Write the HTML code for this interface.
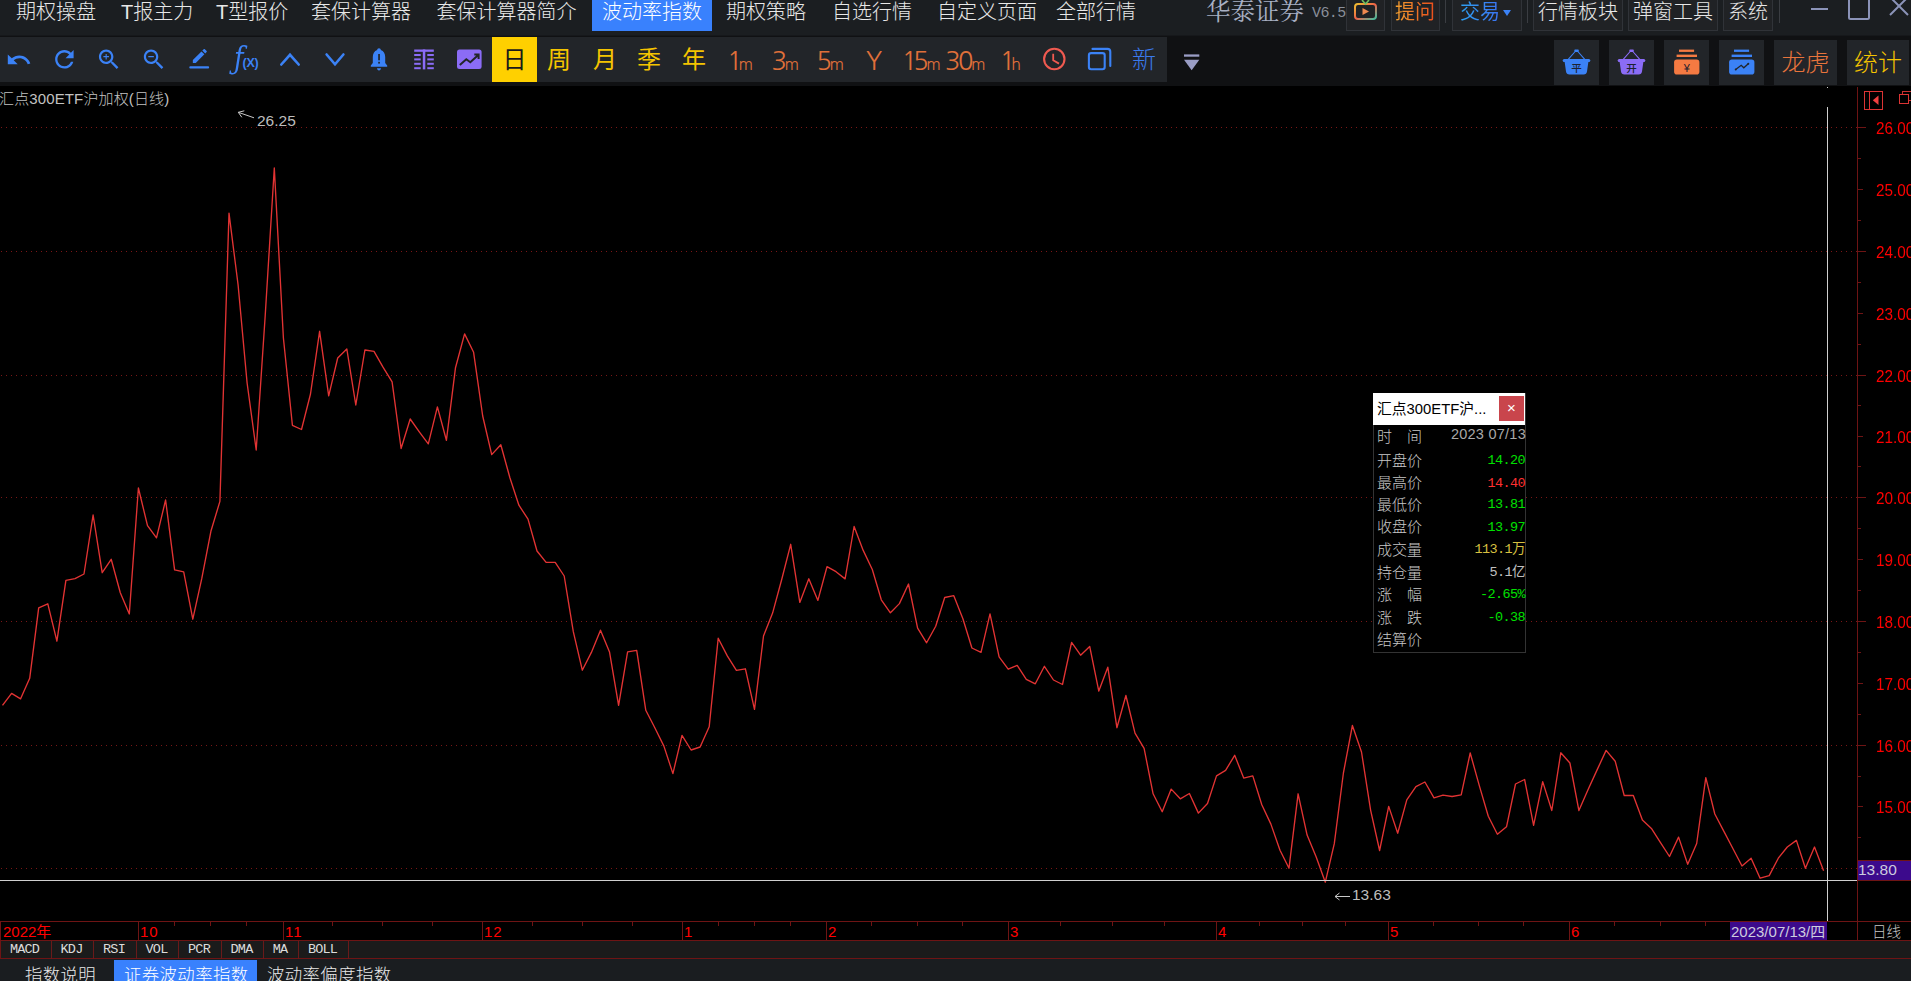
<!DOCTYPE html><html lang="zh"><head><meta charset="utf-8"><title>波动率指数</title><style>
html,body{margin:0;padding:0;background:#000;}
body{width:1911px;height:981px;overflow:hidden;position:relative;font-family:"Liberation Sans","Noto Sans CJK SC",sans-serif;}
.a{position:absolute;white-space:nowrap;}
.m{position:absolute;top:-3.5px;height:30px;line-height:30px;font-size:20px;color:#e8e8e8;font-weight:300;white-space:nowrap;}
.bx{position:absolute;top:-1px;height:32px;border:1px solid #303338;background:#202225;box-sizing:border-box;}
.tk{position:absolute;top:37px;height:45px;line-height:45px;text-align:center;white-space:nowrap;}
.yl{color:#f5c400;font-size:24px;line-height:46.5px;}
.or{color:#e0703a;font-family:"NanumGothic",sans-serif;font-weight:400;line-height:49.5px;}
.rb{position:absolute;top:40px;height:44.5px;background:#222529;}
.ax{position:absolute;transform:scaleX(0.955);transform-origin:0 0;font-size:16px;color:#ff0000;white-space:nowrap;line-height:16px;}
.tx{position:absolute;font-size:15px;color:#ff0000;white-space:nowrap;line-height:16px;top:924px;}
.ind{position:absolute;top:941px;height:18px;line-height:18px;font-size:13.5px;color:#dcdcdc;text-align:center;border-right:1px solid #6a1a1a;box-sizing:border-box;font-family:"Liberation Mono","Noto Sans CJK SC",monospace;letter-spacing:-0.8px;text-indent:-2px;}
.bt{position:absolute;top:961px;height:30px;line-height:28px;font-size:17.4px;letter-spacing:0.4px;color:#e8e8e8;font-weight:300;white-space:nowrap;}
.tl{position:absolute;left:1377px;font-size:15px;color:#c8c8c8;line-height:18px;white-space:pre;font-weight:300;}
.tv{position:absolute;right:386px;font-size:13.5px;line-height:18px;white-space:pre;font-family:"Liberation Mono","Noto Sans CJK SC",monospace;letter-spacing:-0.6px;}
</style></head><body>
<div class="a" style="left:0;top:0;width:1911px;height:35px;background:#1b1e21"></div>
<div class="a" style="left:0;top:35px;width:1911px;height:1px;background:#16181b"></div>
<div class="a" style="left:592px;top:0;width:120px;height:31px;background:#3981fd"></div>
<div class="m" style="left:16px;color:#e8e8e8">期权操盘</div>
<div class="m" style="left:121px;color:#e8e8e8">T报主力</div>
<div class="m" style="left:216px;color:#e8e8e8">T型报价</div>
<div class="m" style="left:311px;color:#e8e8e8">套保计算器</div>
<div class="m" style="left:436.5px;color:#e8e8e8">套保计算器简介</div>
<div class="m" style="left:602px;color:#fff">波动率指数</div>
<div class="m" style="left:726px;color:#e8e8e8">期权策略</div>
<div class="m" style="left:832px;color:#e8e8e8">自选行情</div>
<div class="m" style="left:937px;color:#e8e8e8">自定义页面</div>
<div class="m" style="left:1056px;color:#e8e8e8">全部行情</div>
<div class="a" style="left:1206px;top:-5px;font-family:'Liberation Serif','Noto Serif CJK SC',serif;font-size:24.5px;line-height:34px;color:#a8b0c4;font-weight:400">华泰证券</div>
<div class="a" style="left:1312px;top:4px;font-family:'Liberation Mono',monospace;font-size:15px;line-height:20px;color:#8a8f9a;letter-spacing:-0.6px">V6.5</div>
<div class="bx" style="left:1346px;width:39px"></div>
<div class="bx" style="left:1391px;width:49px"></div>
<div class="bx" style="left:1452px;width:70px"></div>
<div class="bx" style="left:1533px;width:90px"></div>
<div class="bx" style="left:1628px;width:90px"></div>
<div class="bx" style="left:1723px;width:50px"></div>
<div class="a" style="left:1445px;top:0;width:1px;height:23px;background:#3a3d42"></div>
<div class="a" style="left:1527px;top:0;width:1px;height:23px;background:#3a3d42"></div>
<div class="a" style="left:1779px;top:0;width:1px;height:23px;background:#3a3d42"></div>
<div class="m" style="left:1395px;font-weight:400;background:linear-gradient(90deg,#f2a030,#ea4c1c);-webkit-background-clip:text;background-clip:text;color:transparent">提问</div>
<div class="m" style="left:1460px;font-weight:400;background:linear-gradient(90deg,#2ea0f0,#3b72f2);-webkit-background-clip:text;background-clip:text;color:transparent">交易</div>
<div class="a" style="left:1503px;top:10px;width:0;height:0;border-left:4.5px solid transparent;border-right:4.5px solid transparent;border-top:6px solid #3b82f6"></div>
<div class="m" style="left:1538px">行情板块</div>
<div class="m" style="left:1633px">弹窗工具</div>
<div class="m" style="left:1728px">系统</div>
<svg class="a" style="left:1350px;top:0" width="32" height="24" viewBox="0 0 32 24"><defs><linearGradient id="tvg" x1="0" y1="0" x2="1" y2="1"><stop offset="0" stop-color="#f0c030"/><stop offset="0.5" stop-color="#f06048"/><stop offset="1" stop-color="#40c0a0"/></linearGradient></defs><rect x="5" y="4" width="21" height="15" rx="3" fill="none" stroke="url(#tvg)" stroke-width="2"/><path d="M12 0 L15.5 4 L19 0" fill="none" stroke="#70c060" stroke-width="1.6"/><path d="M12.5 8 L19 11.5 L12.5 15 Z" fill="#f08a50"/></svg>
<div class="a" style="left:1811px;top:7.5px;width:17px;height:2px;background:#8b93b8"></div>
<div class="a" style="left:1848px;top:-6px;width:18px;height:22px;border:2px solid #8b93b8;border-radius:2.5px"></div>
<svg class="a" style="left:1888px;top:0" width="23" height="17" viewBox="0 0 23 17"><path d="M2 -3 L20 15 M20 -3 L2 15" stroke="#8b93b8" stroke-width="2" fill="none"/></svg>
<div class="a" style="left:0;top:36px;width:1911px;height:50px;background:#101113"></div>
<div class="a" style="left:0;top:37px;width:1167px;height:45px;background:#222529"></div>
<div class="a" style="left:492px;top:37px;width:45px;height:45px;background:#ffd000"></div>
<div class="tk yl" style="left:492.0px;width:45px;color:#1a1a1a">日</div>
<div class="tk yl" style="left:536.5px;width:45px;">周</div>
<div class="tk yl" style="left:582.5px;width:45px;">月</div>
<div class="tk yl" style="left:626.5px;width:45px;">季</div>
<div class="tk yl" style="left:671.5px;width:45px;">年</div>
<div class="tk or" style="left:717.2px;width:45px;"><span style="font-size:25.5px;letter-spacing:-2.4px"><span style="letter-spacing:-4px">1</span></span><span style="font-size:16px;letter-spacing:-0.5px">m</span></div>
<div class="tk or" style="left:762.5px;width:45px;"><span style="font-size:25.5px;letter-spacing:-2.4px">3</span><span style="font-size:16px;letter-spacing:-0.5px">m</span></div>
<div class="tk or" style="left:807.5px;width:45px;"><span style="font-size:25.5px;letter-spacing:-2.4px">5</span><span style="font-size:16px;letter-spacing:-0.5px">m</span></div>
<div class="tk or" style="left:851.5px;width:45px;"><span style="font-size:25px;position:relative;top:-1px">Y</span></div>
<div class="tk or" style="left:891.0px;width:60px;"><span style="font-size:25.5px;letter-spacing:-2.4px"><span style="letter-spacing:-4px">1</span>5</span><span style="font-size:16px;letter-spacing:-0.5px">m</span></div>
<div class="tk or" style="left:935.0px;width:60px;"><span style="font-size:25.5px;letter-spacing:-2.4px">30</span><span style="font-size:16px;letter-spacing:-0.5px">m</span></div>
<div class="tk or" style="left:987.5px;width:45px;"><span style="font-size:25.5px;letter-spacing:-2.4px"><span style="letter-spacing:-4px">1</span></span><span style="font-size:16px;letter-spacing:-0.5px">h</span></div>
<div class="tk " style="left:1121.5px;width:45px;color:#3a7aec;font-size:24px;font-weight:300">新</div>
<div class="rb" style="left:1554px;width:45px"></div>
<div class="rb" style="left:1609px;width:45px"></div>
<div class="rb" style="left:1664px;width:45px"></div>
<div class="rb" style="left:1719px;width:45px"></div>
<div class="rb" style="left:1774px;width:63px"></div>
<div class="rb" style="left:1847px;width:62px"></div>
<div class="a" style="left:1774px;top:40px;width:63px;height:44px;line-height:46px;text-align:center;font-size:24px;color:#e8743c;font-weight:300">龙虎</div>
<div class="a" style="left:1847px;top:40px;width:62px;height:44px;line-height:46px;text-align:center;font-size:24px;color:#f5c400;font-weight:300">统计</div>
<svg class="a" style="left:0;top:0" width="1911" height="90" viewBox="0 0 1911 90">
<g fill="#3b82f6">
<path transform="translate(5.6,46.7) scale(1.1)" d="M12.5 8c-2.65 0-5.05.99-6.9 2.6L2 7v9h9l-3.62-3.62c1.39-1.16 3.16-1.88 5.12-1.88 3.54 0 6.55 2.31 7.6 5.5l2.37-.78C21.08 11.03 17.15 8 12.5 8z"/>
<path transform="translate(50.5,45.5) scale(1.156)" d="M17.65 6.35C16.2 4.9 14.21 4 12 4c-4.42 0-7.99 3.58-7.99 8s3.57 8 7.99 8c3.73 0 6.84-2.55 7.73-6h-2.08c-.82 2.33-3.04 4-5.65 4-3.31 0-6-2.69-6-6s2.69-6 6-6c1.66 0 3.14.69 4.22 1.78L13 11h7V4l-2.35 2.35z"/>
<path transform="translate(95.6,46.1) scale(1.112)" d="M15.5 14h-.79l-.28-.27C15.41 12.59 16 11.11 16 9.5 16 5.91 13.09 3 9.5 3S3 5.91 3 9.5 5.91 16 9.5 16c1.61 0 3.09-.59 4.23-1.57l.27.28v.79l5 4.99L20.49 19l-4.99-5zm-6 0C7.01 14 5 11.99 5 9.5S7.01 5 9.5 5 14 7.01 14 9.5 11.99 14 9.5 14z M12 10h-2v2H9v-2H7V9h2V7h1v2h2v1z"/>
<path transform="translate(140.5,46.1) scale(1.112)" d="M15.5 14h-.79l-.28-.27C15.41 12.59 16 11.11 16 9.5 16 5.91 13.09 3 9.5 3S3 5.91 3 9.5 5.91 16 9.5 16c1.61 0 3.09-.59 4.23-1.57l.27.28v.79l5 4.99L20.49 19l-4.99-5zm-6 0C7.01 14 5 11.99 5 9.5S7.01 5 9.5 5 14 7.01 14 9.5 11.99 14 9.5 14zM7 9h5v1H7z"/>
<path transform="translate(190.5,46.6) scale(0.78)" d="M3 17.25V21h3.75L17.81 9.94l-3.75-3.75L3 17.25zM20.71 7.04c.39-.39.39-1.02 0-1.41l-2.34-2.34c-.39-.39-1.02-.39-1.41 0l-1.83 1.83 3.75 3.75 1.83-1.83z"/>
<rect x="189.3" y="66.3" width="19.8" height="2.2" rx="1"/>
</g>
<g fill="none" stroke="#3b82f6" stroke-width="2.6" stroke-linecap="round" stroke-linejoin="miter">
<path d="M281.3 64.5 L290 54.8 L298.7 64.5"/>
<path d="M326.6 54.5 L335 64.3 L343.4 54.5"/>
</g>
<!-- bell -->
<g fill="#3b82f6">
<path d="M379 48.3 c1.1 0 1.8 .8 1.8 1.8 c3 1 4.4 3.800 4.4 7 v5.800 l2 2.600 v1.300 h-16.400 v-1.300 l2 -2.600 v-5.800 c0 -3.200 1.400 -6 4.400 -7 c0 -1 .7 -1.800 1.800 -1.800z"/>
<path d="M377 68.200 h4 c0 1.200 -.9 2.200 -2 2.200 s-2 -1 -2 -2.200z"/>
</g>
<rect x="378.200" y="54" width="1.700" height="6.300" fill="#222529"/><rect x="378.200" y="61.800" width="1.700" height="1.800" fill="#222529"/>
<!-- table -->
<g fill="#8b6cf6">
<rect x="414.200" y="49.500" width="19.600" height="2.300"/>
<rect x="422.800" y="49.500" width="2.500" height="19.900"/>
<rect x="414.200" y="54" width="6.500" height="2"/><rect x="414.200" y="58.400" width="6.500" height="2"/><rect x="414.200" y="62.800" width="6.500" height="2"/><rect x="414.200" y="67.200" width="6.500" height="2"/>
<rect x="427.300" y="54" width="6.500" height="2"/><rect x="427.300" y="58.400" width="6.500" height="2"/><rect x="427.300" y="62.800" width="6.500" height="2"/><rect x="427.300" y="67.200" width="6.500" height="2"/>
<!-- chart image -->
<rect x="457" y="49.500" width="24.600" height="19.500" rx="2.500"/>
</g>
<path d="M459.800 65 L466.300 59.300 L470.300 62.300 L478 55.200 M474.300 54.600 L478.600 54.600 L478.600 59" fill="none" stroke="#222529" stroke-width="2"/>
<!-- clock -->
<circle cx="1054.300" cy="59" r="10.200" fill="none" stroke="#f05a50" stroke-width="2.100"/>
<path d="M1053.200 53.800 L1053.200 60.300 L1059 63.600" fill="none" stroke="#f05a50" stroke-width="1.800"/>
<!-- copy -->
<rect x="1088.900" y="53.100" width="15.800" height="16.200" rx="2.200" fill="none" stroke="#3b82f6" stroke-width="2.100"/>
<path d="M1092.500 48.900 L1107.500 48.900 Q1110.300 48.900 1110.300 51.700 L1110.300 66" fill="none" stroke="#3b82f6" stroke-width="2.100" stroke-linecap="round"/>
<!-- dropdown -->
<rect x="1184" y="54.400" width="15.300" height="2.300" fill="#9a9dc5"/>
<path d="M1184 59.800 L1199.300 59.800 L1191.650 70.300 Z" fill="#9a9dc5"/>
<!-- baskets -->
<g id="bk1" fill="#3b82f6">
<rect x="1562.700" y="59" width="27.600" height="3" rx="1.500"/>
<path d="M1564.500 61 L1588.500 61 L1587 71.600 Q1586.600 74.600 1583.600 74.600 L1569.400 74.600 Q1566.400 74.600 1566 71.600 Z"/>
<rect x="1574.300" y="49.600" width="4.500" height="2.300" rx="0.800"/>
<path d="M1567.800 59.800 L1575.600 51 M1585.200 59.800 L1577.400 51" stroke="#3b82f6" stroke-width="1.100" fill="none"/>
</g>
<g id="bk2" fill="#8b6cf6" transform="translate(55,0)">
<rect x="1562.700" y="59" width="27.600" height="3" rx="1.500"/>
<path d="M1564.500 61 L1588.500 61 L1587 71.600 Q1586.600 74.600 1583.600 74.600 L1569.400 74.600 Q1566.400 74.600 1566 71.600 Z"/>
<rect x="1574.300" y="49.600" width="4.500" height="2.300" rx="0.800"/>
<path d="M1567.800 59.800 L1575.600 51 M1585.200 59.800 L1577.400 51" stroke="#8b6cf6" stroke-width="1.100" fill="none"/>
</g>
<g fill="#f57a42">
<rect x="1679" y="49.600" width="15.100" height="2.300"/>
<rect x="1676.600" y="54.600" width="20.400" height="2.400"/>
<rect x="1674.100" y="59.600" width="25.300" height="15" rx="2.800"/>
</g>
<g fill="#3b82f6">
<rect x="1734" y="49.600" width="15.100" height="2.300"/>
<rect x="1731.600" y="54.600" width="20.400" height="2.400"/>
<rect x="1729.100" y="59.600" width="25.300" height="15" rx="2.800"/>
</g>
<path d="M1735.700 69.600 L1741.200 65.300 L1743.800 67.800 L1748.300 63.800" fill="none" stroke="#222529" stroke-width="1.300"/>
<circle cx="1735.700" cy="69.600" r="1" fill="#222529"/><circle cx="1748.300" cy="63.800" r="1" fill="#222529"/>
<g font-family="'Liberation Sans','Noto Sans CJK SC',sans-serif" font-size="10.500" fill="#1d2230" text-anchor="middle" font-weight="500">
<text x="1576.500" y="72.300">平</text>
<text x="1631.500" y="72.300">开</text>
<text x="1686.700" y="71.800" font-size="11">¥</text>
</g>
</svg>
<div class="a" style="left:233.5px;top:38px;line-height:40px;color:#3b82f6;font-family:'DejaVu Serif',serif;font-style:italic;font-size:31.5px;transform:scaleX(0.82);transform-origin:0 0">ƒ</div>
<div class="a" style="left:242.5px;top:56px;line-height:14px;color:#3b82f6;font-size:12.5px;font-weight:bold;letter-spacing:-0.2px">(X)</div>

<svg class="a" style="left:0;top:0" width="1911" height="981" viewBox="0 0 1911 981">
<line x1="1" x2="1857" y1="127.5" y2="127.5" stroke="#7a1616" stroke-width="1" stroke-dasharray="1 4" shape-rendering="crispEdges"/>
<line x1="1" x2="1857" y1="251.5" y2="251.5" stroke="#7a1616" stroke-width="1" stroke-dasharray="1 4" shape-rendering="crispEdges"/>
<line x1="1" x2="1857" y1="375.5" y2="375.5" stroke="#7a1616" stroke-width="1" stroke-dasharray="1 4" shape-rendering="crispEdges"/>
<line x1="1" x2="1857" y1="497.5" y2="497.5" stroke="#7a1616" stroke-width="1" stroke-dasharray="1 4" shape-rendering="crispEdges"/>
<line x1="1" x2="1857" y1="621.5" y2="621.5" stroke="#7a1616" stroke-width="1" stroke-dasharray="1 4" shape-rendering="crispEdges"/>
<line x1="1" x2="1857" y1="745.5" y2="745.5" stroke="#7a1616" stroke-width="1" stroke-dasharray="1 4" shape-rendering="crispEdges"/>
<line x1="1" x2="1857" y1="868.5" y2="868.5" stroke="#7a1616" stroke-width="1" stroke-dasharray="1 4" shape-rendering="crispEdges"/>
<line x1="1857.5" x2="1857.5" y1="87" y2="941" stroke="#6e1414" stroke-width="1" shape-rendering="crispEdges"/>
<line x1="1857" x2="1866" y1="127.5" y2="127.5" stroke="#6e1414" stroke-width="1" shape-rendering="crispEdges"/>
<line x1="1857" x2="1861" y1="158.5" y2="158.5" stroke="#6e1414" stroke-width="1" shape-rendering="crispEdges"/>
<line x1="1857" x2="1863" y1="189.5" y2="189.5" stroke="#6e1414" stroke-width="1" shape-rendering="crispEdges"/>
<line x1="1857" x2="1861" y1="220.5" y2="220.5" stroke="#6e1414" stroke-width="1" shape-rendering="crispEdges"/>
<line x1="1857" x2="1866" y1="251.5" y2="251.5" stroke="#6e1414" stroke-width="1" shape-rendering="crispEdges"/>
<line x1="1857" x2="1861" y1="282.5" y2="282.5" stroke="#6e1414" stroke-width="1" shape-rendering="crispEdges"/>
<line x1="1857" x2="1863" y1="313.5" y2="313.5" stroke="#6e1414" stroke-width="1" shape-rendering="crispEdges"/>
<line x1="1857" x2="1861" y1="344.5" y2="344.5" stroke="#6e1414" stroke-width="1" shape-rendering="crispEdges"/>
<line x1="1857" x2="1866" y1="375.5" y2="375.5" stroke="#6e1414" stroke-width="1" shape-rendering="crispEdges"/>
<line x1="1857" x2="1861" y1="405.5" y2="405.5" stroke="#6e1414" stroke-width="1" shape-rendering="crispEdges"/>
<line x1="1857" x2="1863" y1="436.5" y2="436.5" stroke="#6e1414" stroke-width="1" shape-rendering="crispEdges"/>
<line x1="1857" x2="1861" y1="466.5" y2="466.5" stroke="#6e1414" stroke-width="1" shape-rendering="crispEdges"/>
<line x1="1857" x2="1866" y1="497.5" y2="497.5" stroke="#6e1414" stroke-width="1" shape-rendering="crispEdges"/>
<line x1="1857" x2="1861" y1="528.5" y2="528.5" stroke="#6e1414" stroke-width="1" shape-rendering="crispEdges"/>
<line x1="1857" x2="1863" y1="559.5" y2="559.5" stroke="#6e1414" stroke-width="1" shape-rendering="crispEdges"/>
<line x1="1857" x2="1861" y1="590.5" y2="590.5" stroke="#6e1414" stroke-width="1" shape-rendering="crispEdges"/>
<line x1="1857" x2="1866" y1="621.5" y2="621.5" stroke="#6e1414" stroke-width="1" shape-rendering="crispEdges"/>
<line x1="1857" x2="1861" y1="652.5" y2="652.5" stroke="#6e1414" stroke-width="1" shape-rendering="crispEdges"/>
<line x1="1857" x2="1863" y1="683.5" y2="683.5" stroke="#6e1414" stroke-width="1" shape-rendering="crispEdges"/>
<line x1="1857" x2="1861" y1="714.5" y2="714.5" stroke="#6e1414" stroke-width="1" shape-rendering="crispEdges"/>
<line x1="1857" x2="1866" y1="745.5" y2="745.5" stroke="#6e1414" stroke-width="1" shape-rendering="crispEdges"/>
<line x1="1857" x2="1861" y1="776.5" y2="776.5" stroke="#6e1414" stroke-width="1" shape-rendering="crispEdges"/>
<line x1="1857" x2="1863" y1="806.5" y2="806.5" stroke="#6e1414" stroke-width="1" shape-rendering="crispEdges"/>
<line x1="1857" x2="1861" y1="837.5" y2="837.5" stroke="#6e1414" stroke-width="1" shape-rendering="crispEdges"/>
<line x1="1857" x2="1866" y1="868.5" y2="868.5" stroke="#6e1414" stroke-width="1" shape-rendering="crispEdges"/>
<polyline points="2.5,705.4 11.6,693.4 20.6,698.8 29.7,678.3 38.7,607.8 47.8,603.8 56.9,641.2 65.9,580.4 75.0,578.7 84.0,574.0 93.1,515.0 102.2,572.7 111.2,559.3 120.3,592.7 129.3,614.0 138.4,488.0 147.5,525.6 156.5,537.9 165.6,500.0 174.6,569.9 183.7,571.8 192.8,619.2 201.8,578.4 210.9,531.3 219.9,501.4 229.0,213.2 238.1,285.0 247.1,383.0 256.2,450.0 265.2,315.8 274.3,168.0 283.4,338.0 292.4,425.3 301.5,429.5 310.5,394.0 319.6,331.3 328.7,395.8 337.7,358.0 346.8,348.9 355.8,405.0 364.9,350.0 374.0,351.4 383.0,367.2 392.1,381.9 401.1,448.5 410.2,419.0 419.3,431.8 428.3,443.9 437.4,406.9 446.4,440.3 455.5,367.7 464.6,333.9 473.6,352.3 482.7,416.0 491.7,454.6 500.8,444.7 509.9,477.7 518.9,505.2 528.0,519.1 537.0,551.0 546.1,562.4 555.2,562.4 564.2,576.0 573.3,631.7 582.3,670.2 591.4,652.4 600.5,630.2 609.5,651.9 618.6,705.4 627.6,651.9 636.7,650.4 645.8,710.3 654.8,727.8 663.9,746.1 672.9,773.6 682.0,735.4 691.1,750.0 700.1,747.0 709.2,726.8 718.2,638.2 727.3,655.9 736.4,670.3 745.4,668.8 754.5,709.4 763.5,636.0 772.6,613.1 781.7,579.5 790.7,544.3 799.8,602.4 808.8,578.8 817.9,600.4 827.0,566.7 836.0,571.7 845.1,578.9 854.1,526.5 863.2,550.4 872.3,569.5 881.3,599.8 890.4,612.8 899.4,603.6 908.5,584.0 917.6,628.2 926.6,642.8 935.7,626.2 944.7,597.5 953.8,595.7 962.9,618.8 971.9,648.0 981.0,652.4 990.0,613.9 999.1,656.9 1008.2,669.2 1017.2,665.4 1026.3,679.3 1035.3,683.8 1044.4,666.3 1053.5,680.0 1062.5,684.5 1071.6,642.4 1080.6,655.2 1089.7,646.4 1098.8,691.1 1107.8,667.2 1116.9,727.7 1125.9,695.5 1135.0,733.2 1144.1,748.4 1153.1,793.8 1162.2,811.7 1171.2,789.1 1180.3,798.8 1189.4,793.5 1198.4,813.1 1207.5,803.5 1216.5,775.9 1225.6,770.4 1234.7,755.3 1243.7,778.1 1252.8,775.9 1261.8,804.8 1270.9,824.1 1280.0,850.3 1289.0,868.2 1298.1,793.8 1307.1,835.1 1316.2,857.1 1325.3,882.2 1334.3,843.7 1343.4,773.0 1352.4,725.5 1361.5,752.0 1370.6,810.1 1379.6,850.5 1388.7,806.4 1397.7,833.2 1406.8,799.9 1415.9,786.7 1424.9,782.0 1434.0,797.9 1443.0,795.2 1452.1,796.5 1461.2,794.8 1470.2,753.0 1479.3,785.6 1488.3,816.2 1497.4,834.2 1506.5,826.8 1515.5,784.0 1524.6,779.5 1533.6,825.4 1542.7,781.6 1551.8,810.5 1560.8,752.8 1569.9,763.0 1578.9,810.6 1588.0,789.8 1597.1,769.9 1606.1,750.4 1615.2,761.2 1624.2,795.5 1633.3,795.5 1642.4,820.1 1651.4,828.4 1660.5,842.6 1669.5,856.5 1678.6,837.1 1687.7,864.3 1696.7,843.5 1705.8,777.7 1714.8,814.0 1723.9,831.4 1733.0,848.7 1742.0,866.0 1751.1,858.2 1760.1,878.2 1769.2,875.6 1778.3,858.2 1787.3,847.0 1796.4,840.4 1805.4,868.3 1814.5,847.0 1823.6,870.7" fill="none" stroke="#e23333" stroke-width="1.35" stroke-linejoin="round"/>
<line x1="0" x2="1857" y1="880.5" y2="880.5" stroke="#d0d0d0" stroke-width="1" shape-rendering="crispEdges"/>
<line x1="1827.5" x2="1827.5" y1="107" y2="922" stroke="#d0d0d0" stroke-width="1" shape-rendering="crispEdges"/>
<rect x="1827" y="87" width="1" height="1" fill="#d0d0d0"/>
<line x1="0" x2="1911" y1="921.5" y2="921.5" stroke="#6e1414" stroke-width="1" shape-rendering="crispEdges"/>
<rect x="0" y="941" width="1911" height="18" fill="#1b1b1b"/>
<line x1="0" x2="1911" y1="940.5" y2="940.5" stroke="#6e1414" stroke-width="1" shape-rendering="crispEdges"/>
<line x1="0" x2="1911" y1="958.5" y2="958.5" stroke="#6e1414" stroke-width="1" shape-rendering="crispEdges"/>
<line x1="0.5" x2="0.5" y1="921" y2="959" stroke="#6e1414" stroke-width="1" shape-rendering="crispEdges"/>
<line x1="138.5" x2="138.5" y1="922" y2="940" stroke="#6e1414" stroke-width="1" shape-rendering="crispEdges"/>
<line x1="283.5" x2="283.5" y1="922" y2="940" stroke="#6e1414" stroke-width="1" shape-rendering="crispEdges"/>
<line x1="482.5" x2="482.5" y1="922" y2="940" stroke="#6e1414" stroke-width="1" shape-rendering="crispEdges"/>
<line x1="682.5" x2="682.5" y1="922" y2="940" stroke="#6e1414" stroke-width="1" shape-rendering="crispEdges"/>
<line x1="826.5" x2="826.5" y1="922" y2="940" stroke="#6e1414" stroke-width="1" shape-rendering="crispEdges"/>
<line x1="1008.5" x2="1008.5" y1="922" y2="940" stroke="#6e1414" stroke-width="1" shape-rendering="crispEdges"/>
<line x1="1216.5" x2="1216.5" y1="922" y2="940" stroke="#6e1414" stroke-width="1" shape-rendering="crispEdges"/>
<line x1="1388.5" x2="1388.5" y1="922" y2="940" stroke="#6e1414" stroke-width="1" shape-rendering="crispEdges"/>
<line x1="1569.5" x2="1569.5" y1="922" y2="940" stroke="#6e1414" stroke-width="1" shape-rendering="crispEdges"/>
<line x1="174.5" x2="174.5" y1="922" y2="926" stroke="#6e1414" stroke-width="1" shape-rendering="crispEdges"/>
<line x1="210.5" x2="210.5" y1="922" y2="926" stroke="#6e1414" stroke-width="1" shape-rendering="crispEdges"/>
<line x1="246.5" x2="246.5" y1="922" y2="926" stroke="#6e1414" stroke-width="1" shape-rendering="crispEdges"/>
<line x1="332.5" x2="332.5" y1="922" y2="926" stroke="#6e1414" stroke-width="1" shape-rendering="crispEdges"/>
<line x1="382.5" x2="382.5" y1="922" y2="926" stroke="#6e1414" stroke-width="1" shape-rendering="crispEdges"/>
<line x1="432.5" x2="432.5" y1="922" y2="926" stroke="#6e1414" stroke-width="1" shape-rendering="crispEdges"/>
<line x1="532.5" x2="532.5" y1="922" y2="926" stroke="#6e1414" stroke-width="1" shape-rendering="crispEdges"/>
<line x1="582.5" x2="582.5" y1="922" y2="926" stroke="#6e1414" stroke-width="1" shape-rendering="crispEdges"/>
<line x1="632.5" x2="632.5" y1="922" y2="926" stroke="#6e1414" stroke-width="1" shape-rendering="crispEdges"/>
<line x1="718.5" x2="718.5" y1="922" y2="926" stroke="#6e1414" stroke-width="1" shape-rendering="crispEdges"/>
<line x1="754.5" x2="754.5" y1="922" y2="926" stroke="#6e1414" stroke-width="1" shape-rendering="crispEdges"/>
<line x1="790.5" x2="790.5" y1="922" y2="926" stroke="#6e1414" stroke-width="1" shape-rendering="crispEdges"/>
<line x1="871.5" x2="871.5" y1="922" y2="926" stroke="#6e1414" stroke-width="1" shape-rendering="crispEdges"/>
<line x1="917.5" x2="917.5" y1="922" y2="926" stroke="#6e1414" stroke-width="1" shape-rendering="crispEdges"/>
<line x1="962.5" x2="962.5" y1="922" y2="926" stroke="#6e1414" stroke-width="1" shape-rendering="crispEdges"/>
<line x1="1060.5" x2="1060.5" y1="922" y2="926" stroke="#6e1414" stroke-width="1" shape-rendering="crispEdges"/>
<line x1="1112.5" x2="1112.5" y1="922" y2="926" stroke="#6e1414" stroke-width="1" shape-rendering="crispEdges"/>
<line x1="1164.5" x2="1164.5" y1="922" y2="926" stroke="#6e1414" stroke-width="1" shape-rendering="crispEdges"/>
<line x1="1259.5" x2="1259.5" y1="922" y2="926" stroke="#6e1414" stroke-width="1" shape-rendering="crispEdges"/>
<line x1="1302.5" x2="1302.5" y1="922" y2="926" stroke="#6e1414" stroke-width="1" shape-rendering="crispEdges"/>
<line x1="1345.5" x2="1345.5" y1="922" y2="926" stroke="#6e1414" stroke-width="1" shape-rendering="crispEdges"/>
<line x1="1433.5" x2="1433.5" y1="922" y2="926" stroke="#6e1414" stroke-width="1" shape-rendering="crispEdges"/>
<line x1="1478.5" x2="1478.5" y1="922" y2="926" stroke="#6e1414" stroke-width="1" shape-rendering="crispEdges"/>
<line x1="1523.5" x2="1523.5" y1="922" y2="926" stroke="#6e1414" stroke-width="1" shape-rendering="crispEdges"/>
<line x1="1614.5" x2="1614.5" y1="922" y2="926" stroke="#6e1414" stroke-width="1" shape-rendering="crispEdges"/>
<line x1="1660.5" x2="1660.5" y1="922" y2="926" stroke="#6e1414" stroke-width="1" shape-rendering="crispEdges"/>
<line x1="1705.5" x2="1705.5" y1="922" y2="926" stroke="#6e1414" stroke-width="1" shape-rendering="crispEdges"/>
<path d="M254 117.8 L238.3 112.3 M238.3 112.3 L244.3 110.8 M238.3 112.3 L241.8 117.3" stroke="#c8c8c8" stroke-width="1" fill="none"/>
<path d="M1350 896.5 L1335 896.5 M1335 896.5 L1339.5 893 M1335 896.5 L1339.5 900" stroke="#c8c8c8" stroke-width="1" fill="none"/>
<rect x="1864.5" y="91.5" width="18" height="18" fill="none" stroke="#dc3434" stroke-width="1" shape-rendering="crispEdges"/>
<line x1="1869.5" x2="1869.5" y1="92" y2="109" stroke="#dc3434" stroke-width="1" shape-rendering="crispEdges"/>
<path d="M1878.5 95.5 L1878.5 105 L1872.8 100.2 Z" fill="#f04040"/>
<rect x="1902.5" y="91.5" width="10" height="9" fill="none" stroke="#c83030" stroke-width="1" shape-rendering="crispEdges"/>
<rect x="1899.5" y="94.5" width="9" height="9" fill="#000" stroke="#dc3434" stroke-width="1" shape-rendering="crispEdges"/>
</svg>
<div class="a" style="left:-1px;top:89.8px;font-size:15px;line-height:18px;color:#c2c2c2;font-weight:300;letter-spacing:0.13px">汇点300ETF沪加权(日线)</div>
<div class="a" style="left:257px;top:111.8px;font-size:15.5px;line-height:18px;color:#bdbdbd">26.25</div>
<div class="a" style="left:1352px;top:886.2px;font-size:15.5px;line-height:18px;color:#bdbdbd">13.63</div>
<div class="ax" style="left:1875.6px;top:121.1px">26.00</div>
<div class="ax" style="left:1875.6px;top:183.1px">25.00</div>
<div class="ax" style="left:1875.6px;top:245.1px">24.00</div>
<div class="ax" style="left:1875.6px;top:307.1px">23.00</div>
<div class="ax" style="left:1875.6px;top:369.1px">22.00</div>
<div class="ax" style="left:1875.6px;top:430.1px">21.00</div>
<div class="ax" style="left:1875.6px;top:491.1px">20.00</div>
<div class="ax" style="left:1875.6px;top:553.1px">19.00</div>
<div class="ax" style="left:1875.6px;top:615.1px">18.00</div>
<div class="ax" style="left:1875.6px;top:677.1px">17.00</div>
<div class="ax" style="left:1875.6px;top:739.1px">16.00</div>
<div class="ax" style="left:1875.6px;top:800.1px">15.00</div>
<div class="a" style="left:1858px;top:860px;width:53px;height:21px;background:#3c0a8c;border-top:1px solid #6e1414;border-bottom:1px solid #6e1414;box-sizing:border-box"></div>
<div class="a" style="left:1858px;top:861px;font-size:15.5px;line-height:18px;color:#ccccdf">13.80</div>
<div class="tx" style="left:3px">2022年</div>
<div class="tx" style="left:140px;letter-spacing:1px;">10</div>
<div class="tx" style="left:285px;letter-spacing:1px;">11</div>
<div class="tx" style="left:484px;letter-spacing:1px;">12</div>
<div class="tx" style="left:684px;">1</div>
<div class="tx" style="left:828px;">2</div>
<div class="tx" style="left:1010px;">3</div>
<div class="tx" style="left:1218px;">4</div>
<div class="tx" style="left:1390px;">5</div>
<div class="tx" style="left:1571px;">6</div>
<div class="a" style="left:1730px;top:922px;width:97px;height:18px;background:#3c0a8c"></div>
<div class="a" style="left:1731px;top:923px;font-size:15px;line-height:17px;color:#ccccdf;letter-spacing:0px">2023/07/13/四</div>
<div class="a" style="left:1872px;top:923px;font-size:14.5px;line-height:18px;color:#c8c8c8;font-weight:300">日线</div>
<div class="ind" style="left:0px;width:52px">MACD</div>
<div class="ind" style="left:52px;width:42px">KDJ</div>
<div class="ind" style="left:94px;width:43px">RSI</div>
<div class="ind" style="left:137px;width:42px">VOL</div>
<div class="ind" style="left:179px;width:43px">PCR</div>
<div class="ind" style="left:222px;width:42px">DMA</div>
<div class="ind" style="left:264px;width:35px">MA</div>
<div class="ind" style="left:299px;width:50px">BOLL</div>
<div class="a" style="left:0;top:959px;width:1911px;height:22px;background:#1a1d20"></div>
<div class="a" style="left:114px;top:960px;width:143px;height:21px;background:#3981fd"></div>
<div class="bt" style="left:25px">指数说明</div>
<div class="bt" style="left:124px;color:#fff">证券波动率指数</div>
<div class="bt" style="left:267px">波动率偏度指数</div>
<div class="a" style="left:1373px;top:393px;width:153px;height:260px;background:#000;border:1px solid #333;box-sizing:border-box"></div>
<div class="a" style="left:1373px;top:393px;width:152px;height:32px;background:#fff"></div>
<div class="a" style="left:1377px;top:400px;font-size:14.8px;line-height:18px;color:#000">汇点300ETF沪...</div>
<div class="a" style="left:1499px;top:396px;width:25px;height:25px;background:#c9454c;color:#fff;text-align:center;line-height:24px;font-size:15px">×</div>
<div class="tl" style="top:428.2px">时　间</div>
<div class="a" style="right:385px;top:425.4px;font-size:14.5px;line-height:18px;color:#a8a8a8;white-space:pre;letter-spacing:0.25px">2023 07/13</div>
<div class="tl" style="top:451.5px">开盘价</div>
<div class="tv" style="top:451.7px;color:#00e000">14.20</div>
<div class="tl" style="top:474.4px">最高价</div>
<div class="tv" style="top:474.6px;color:#ff3030">14.40</div>
<div class="tl" style="top:496.1px">最低价</div>
<div class="tv" style="top:496.3px;color:#00e000">13.81</div>
<div class="tl" style="top:518.4px">收盘价</div>
<div class="tv" style="top:518.6px;color:#00e000">13.97</div>
<div class="tl" style="top:540.8px">成交量</div>
<div class="tv" style="top:541.0px;color:#d8c040">113.1万</div>
<div class="tl" style="top:563.7px">持仓量</div>
<div class="tv" style="top:563.9px;color:#c0c0c0">5.1亿</div>
<div class="tl" style="top:585.9px">涨　幅</div>
<div class="tv" style="top:586.1px;color:#00e000">-2.65%</div>
<div class="tl" style="top:608.5px">涨　跌</div>
<div class="tv" style="top:608.7px;color:#00e000">-0.38</div>
<div class="tl" style="top:630.7px">结算价</div>
</body></html>
